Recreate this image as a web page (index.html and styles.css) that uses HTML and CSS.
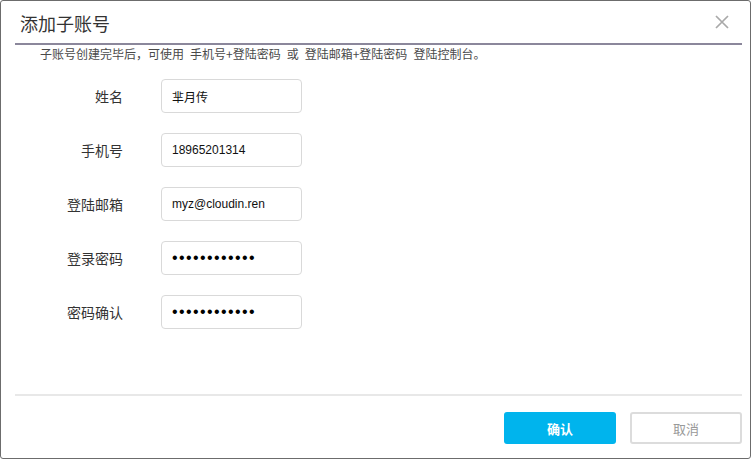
FILE: index.html
```
<!DOCTYPE html>
<html lang="zh-CN">
<head>
<meta charset="utf-8">
<title>添加子账号</title>
<link rel="stylesheet" href="styles.css">
</head>
<body>
<div class="modal">
  <div class="modal-header">
    <h1 class="modal-title">添加子账号</h1>
    <button class="close" type="button" aria-label="关闭">
      <svg width="14" height="14" viewBox="0 0 14 14"><path d="M1 1L13 13M13 1L1 13" stroke="#a9a9a9" stroke-width="1.7" fill="none"/></svg>
    </button>
  </div>
  <p class="desc">子账号创建完毕后，可使用<span class="seg">手机号+登陆密码</span><span class="seg">或</span><span class="seg">登陆邮箱+登陆密码</span><span class="seg">登陆控制台。</span></p>
  <form class="form">
    <label class="label" for="f-name">姓名</label>
    <input class="input" id="f-name" type="text" value="芈月传" readonly>
    <label class="label" for="f-phone">手机号</label>
    <input class="input" id="f-phone" type="text" value="18965201314" readonly>
    <label class="label" for="f-mail">登陆邮箱</label>
    <input class="input" id="f-mail" type="text" value="myz@cloudin.ren" readonly>
    <label class="label" for="f-pw">登录密码</label>
    <input class="input pw" id="f-pw" type="password" value="123456789012" readonly>
    <label class="label" for="f-pw2">密码确认</label>
    <input class="input pw" id="f-pw2" type="password" value="123456789012" readonly>
  </form>
  <div class="modal-footer">
    <button class="btn btn-primary" type="button">确认</button>
    <button class="btn btn-default" type="button">取消</button>
  </div>
</div>
</body>
</html>
```
FILE: styles.css
```
* { box-sizing: border-box; }
html, body { margin: 0; padding: 0; background: #fff; }
body {
  font-family: "Liberation Sans", "Noto Sans CJK SC", sans-serif;
  color: #333;
}
.modal {
  width: 751px;
  height: 459px;
  border: 1px solid #6c6c6c;
  border-radius: 3px;
  background: #fff;
  display: flex;
  flex-direction: column;
}
.modal-header {
  height: 44px;
  margin: 0 8px 0 14px;
  padding: 0 13px 0 5px;
  border-bottom: 2px solid #8b879b;
  display: flex;
  align-items: center;
  justify-content: space-between;
}
.modal-title {
  margin: 0;
  font-family: "Noto Sans CJK SC", sans-serif;
  font-size: 18px;
  font-weight: 400;
  color: #333;
  line-height: 24px;
  padding-top: 1px;
}
.close {
  border: 0;
  background: none;
  padding: 0;
  width: 14px;
  height: 14px;
  display: block;
  cursor: pointer;
}
.close svg { display: block; }
.desc {
  margin: 0;
  padding-left: 39px;
  font-family: "Noto Sans CJK SC", sans-serif;
  font-size: 12px;
  line-height: 18px;
  color: #4a4a4a;
}
.seg { margin-left: 6px; }
.form {
  margin: 16px 0 0 0;
  display: grid;
  grid-template-columns: 122px 141px;
  column-gap: 38px;
  row-gap: 20px;
  align-items: center;
}
.label {
  text-align: right;
  font-family: "Noto Sans CJK SC", sans-serif;
  font-size: 14px;
  color: #333;
}
.input {
  height: 34px;
  width: 141px;
  border: 1px solid #d9d9d9;
  border-radius: 4px;
  padding: 0 10px;
  font-family: "Liberation Sans", "Noto Sans CJK SC", sans-serif;
  font-size: 12px;
  color: #111;
  outline: none;
  background: #fff;
}
.input.pw { font-size: 16px; letter-spacing: 1.4px; color: #000; }
.modal-footer {
  margin: auto 8px 0 14px;
  border-top: 2px solid #e8e8e8;
  padding: 16px 0 14px;
  display: flex;
  justify-content: flex-end;
  gap: 14px;
}
.btn {
  width: 112px;
  height: 32px;
  border-radius: 3px;
  font-family: "Noto Sans CJK SC", sans-serif;
  font-size: 13px;
  cursor: pointer;
}
.btn-primary {
  background: #00b4ed;
  border: 0;
  color: #fff;
  font-weight: 700;
}
.btn-default {
  background: #fff;
  border: 2px solid #dcdcdc;
  color: #999;
}
```
